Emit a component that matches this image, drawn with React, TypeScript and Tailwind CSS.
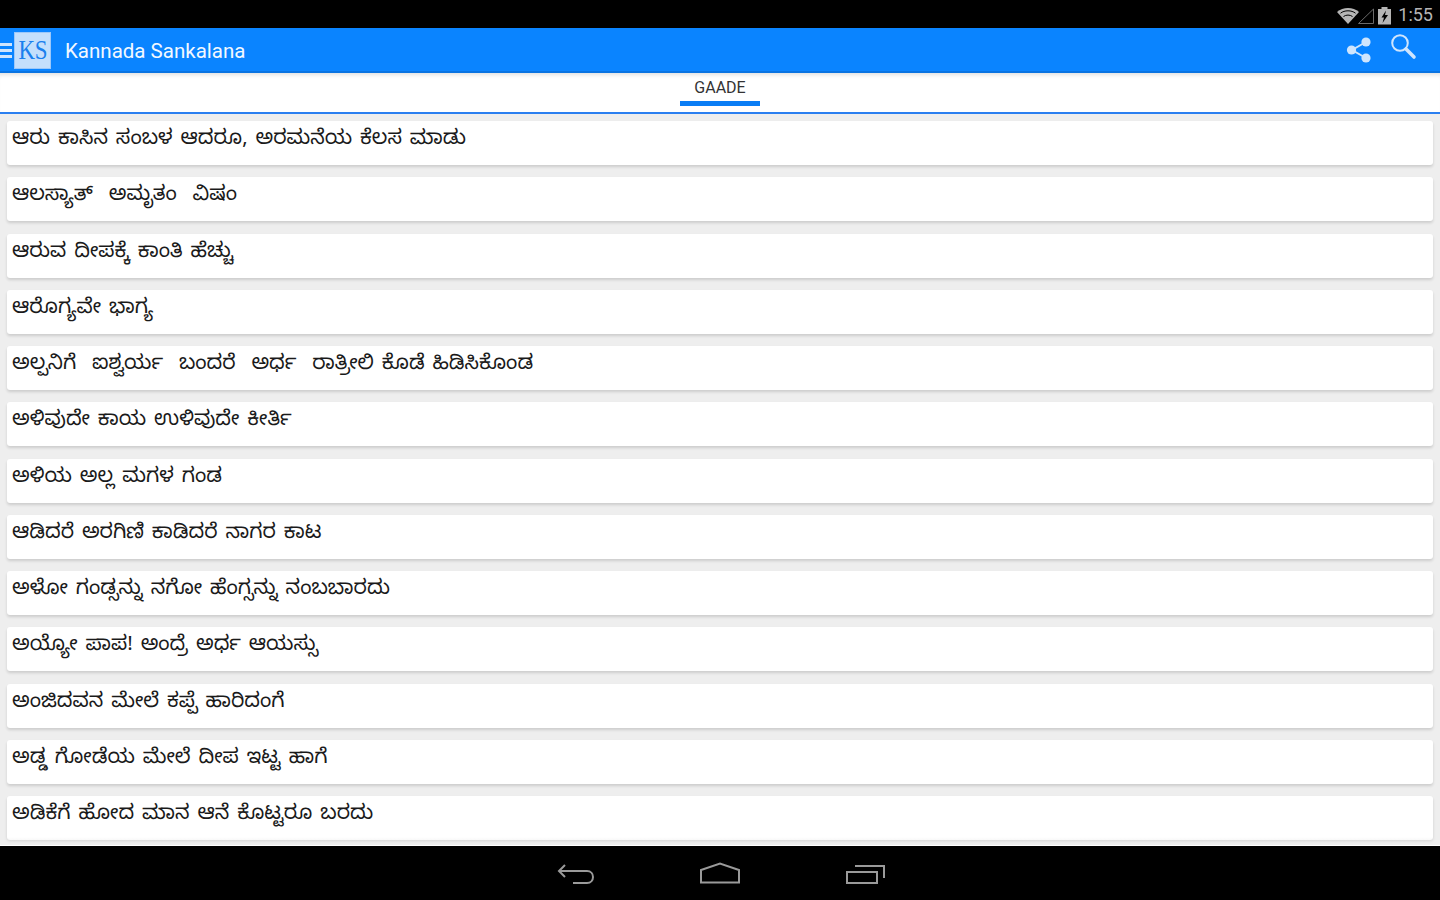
const sayings = [
  "ಆರು ಕಾಸಿನ ಸಂಬಳ ಆದರೂ, ಅರಮನೆಯ ಕೆಲಸ ಮಾಡು",
  "ಆಲಸ್ಯಾತ್  ಅಮೃತಂ  ವಿಷಂ",
  "ಆರುವ ದೀಪಕ್ಕೆ ಕಾಂತಿ ಹೆಚ್ಚು",
  "ಆರೊಗ್ಯವೇ ಭಾಗ್ಯ",
  "ಅಲ್ಪನಿಗೆ  ಐಶ್ವರ್ಯ  ಬಂದರೆ  ಅರ್ಧ  ರಾತ್ರೀಲಿ ಕೊಡೆ ಹಿಡಿಸಿಕೊಂಡ",
  "ಅಳಿವುದೇ ಕಾಯ ಉಳಿವುದೇ ಕೀರ್ತಿ",
  "ಅಳಿಯ ಅಲ್ಲ ಮಗಳ ಗಂಡ",
  "ಆಡಿದರೆ ಅರಗಿಣಿ ಕಾಡಿದರೆ ನಾಗರ ಕಾಟ",
  "ಅಳೋ ಗಂಡ್ಸನ್ನು ನಗೋ ಹೆಂಗ್ಸನ್ನು ನಂಬಬಾರದು",
  "ಅಯ್ಯೋ ಪಾಪ! ಅಂದ್ರೆ ಅರ್ಧ ಆಯಸ್ಸು",
  "ಅಂಜಿದವನ ಮೇಲೆ ಕಪ್ಪೆ ಹಾರಿದಂಗೆ",
  "ಅಡ್ಡ ಗೋಡೆಯ ಮೇಲೆ ದೀಪ ಇಟ್ಟ ಹಾಗೆ",
  "ಅಡಿಕೆಗೆ ಹೋದ ಮಾನ ಆನೆ ಕೊಟ್ಟರೂ ಬರದು",
];

function StatusIcons() {
  return (
    <svg width="60" height="24" viewBox="0 0 60 24" className="text-[#b5b5b5]">
      {/* wifi */}
      <path d="M2 10C8 4.5 18 4.5 24 10L13 22Z" fill="currentColor" />
      <path d="M5.5 11.2C9.5 8 16.5 8 20.5 11.2" stroke="#000" strokeWidth="1" fill="none" />
      <path d="M8.5 14.5C11.2 12.6 14.8 12.6 17.5 14.5" stroke="#000" strokeWidth="1" fill="none" />
      {/* signal */}
      <path d="M23.5 21.5L38.5 7V21.5Z" fill="none" stroke="#6a6a6a" strokeWidth="1" />
      {/* battery */}
      <path d="M43 7h3.5V5h6v2H56v15.500H43Z" fill="currentColor" />
      <path d="M51 8.500L46.500 15.500H49L47.500 21L53 13H50Z" fill="#000" />
    </svg>
  );
}

function LogoTile() {
  return (
    <div className="w-[37px] h-[37px] bg-[#c4dffc] border border-[#9cc8fa] flex items-center justify-center font-['Liberation_Serif',serif] text-[27px] leading-none text-[#1a80ee]">
      <span className="scale-x-[0.85] tracking-[-0.5px]">KS</span>
    </div>
  );
}

export default function App() {
  return (
    <div className="w-[1440px] h-[900px] flex flex-col overflow-hidden bg-[#eeeeee] font-['Roboto',sans-serif]">
      {/* status bar */}
      <div className="h-[28px] shrink-0 bg-black flex items-center justify-end pr-[7px] text-[#b5b5b5]">
        <StatusIcons />
        <span className="ml-[3px] text-[18px] leading-none mt-[1px]">1:55</span>
      </div>

      {/* action bar */}
      <header className="h-[45px] shrink-0 bg-[#0a84ff] border-b-2 border-[#0a74e2] flex items-center">
        <div className="w-[12px] flex flex-col gap-[3px] mt-[1px]">
          <div className="h-[3px] bg-[#cfe5fd]" />
          <div className="h-[3px] bg-[#cfe5fd]" />
          <div className="h-[3px] bg-[#cfe5fd]" />
        </div>
        <div className="ml-[2px] mt-[1px]">
          <LogoTile />
        </div>
        <h1 className="ml-[14px] text-[20.5px] text-[#f2f8ff] font-normal leading-none mt-[3px]">Kannada Sankalana</h1>
        <div className="ml-auto flex items-start pr-[23px]">
          <svg width="28" height="28" viewBox="0 0 28 28" className="mt-[1px] text-[#cfe5fd]">
            <path d="M21 6L7 14L21 22" stroke="currentColor" strokeWidth="2" fill="none" />
            <circle cx="21" cy="6" r="4.6" fill="currentColor" />
            <circle cx="6.500" cy="14" r="4.6" fill="currentColor" />
            <circle cx="21" cy="22" r="4.6" fill="currentColor" />
          </svg>
          <svg width="28" height="28" viewBox="0 0 28 28" className="ml-[16px] -mt-[3px] text-[#cfe5fd]">
            <circle cx="11" cy="11" r="7.800" stroke="currentColor" strokeWidth="2" fill="none" />
            <path d="M17 17L25 25" stroke="currentColor" strokeWidth="3.6" strokeLinecap="round" />
          </svg>
        </div>
      </header>

      {/* tab strip */}
      <div className="h-[41px] shrink-0 bg-white border-b-2 border-[#2a7ff0] flex justify-center shadow-[inset_0_5px_4px_-3px_rgba(0,0,0,0.12)]">
        <div className="w-[80px] h-[33px] flex flex-col items-center justify-end border-b-[5px] border-[#0a7df5]">
          <span className="text-[16px] leading-none text-[#333] mb-[5px]">GAADE</span>
        </div>
      </div>

      {/* list */}
      <main className="relative flex-1 flex flex-col gap-[12.25px] pt-[7px] px-[7px] overflow-hidden">
        {sayings.map((text) => (
          <div
            key={text}
            className="h-[44px] shrink-0 bg-white rounded-[3px] shadow-[0_2px_3px_rgba(0,0,0,0.14)] pl-[5px] pt-[7px] text-[20.5px] leading-[26px] [word-spacing:2px] text-[#1a1a1a] whitespace-pre font-['Noto_Sans_Kannada','Noto_Sans','DejaVu_Sans',sans-serif]"
          >
            {text}
          </div>
        ))}
        {/* fade at the end of the scroll area */}
        <div className="absolute left-0 right-0 bottom-0 h-[8px] bg-gradient-to-b from-[#eeeeee00] to-[#eeeeee]" />
      </main>

      {/* nav bar */}
      <nav className="h-[55px] shrink-0 bg-black border-t border-white flex items-center justify-center gap-[104px] pl-[2px] text-[#9a9a9a]">
        <svg width="38" height="24" viewBox="0 0 38 24">
          <path d="M8 4L2 10L8 16M2 10H30C38 10 38 22 30 22H16" stroke="currentColor" strokeWidth="2" fill="none" />
        </svg>
        <svg width="42" height="22" viewBox="0 0 42 22">
          <path d="M2 20.500V8L21 1.500L40 8V20.500Z" stroke="currentColor" strokeWidth="2" fill="none" />
        </svg>
        <svg width="40" height="22" viewBox="0 0 40 22">
          <path d="M2 10H32V21H2Z" stroke="currentColor" strokeWidth="2" fill="none" />
          <path d="M10 4H39V16" stroke="currentColor" strokeWidth="2" fill="none" />
        </svg>
      </nav>
    </div>
  );
}
